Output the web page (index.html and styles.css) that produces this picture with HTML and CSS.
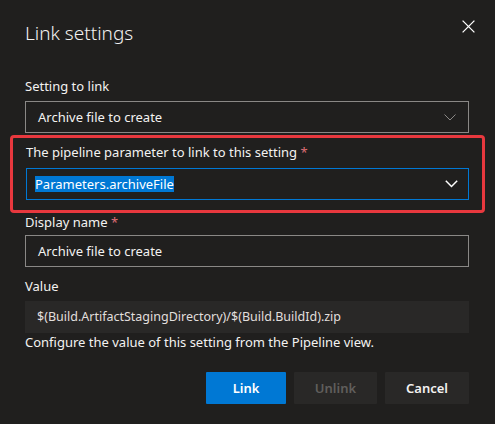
FILE: index.html
```html
<!DOCTYPE html>
<html>
<head>
<meta charset="utf-8">
<link rel="stylesheet" href="styles.css">
</head>
<body>
<div class="dialog">
  <div class="header">
    <h1 class="title">Link settings</h1>
    <button class="close" aria-label="Close">
      <svg width="13" height="13" viewBox="0 0 13 13"><path d="M0.6 0.6 L12.4 12.4 M12.4 0.6 L0.6 12.4" stroke="#ffffff" stroke-width="1.3" fill="none"/></svg>
    </button>
  </div>
  <div class="field f1">
    <div class="label">Setting to link</div>
    <div class="dropdown">
      <span class="text">Archive file to create</span>
      <svg class="chev" width="12" height="7" viewBox="0 0 12 7"><path d="M0.5 0.5 L6 6 L11.5 0.5" stroke="#8a8886" stroke-width="1" fill="none"/></svg>
    </div>
  </div>
  <div class="highlight">
    <div class="label">The pipeline parameter to link to this setting <span class="req">*</span></div>
    <div class="dropdown focus">
      <span class="sel">Parameters.archiveFile</span>
      <svg class="chev white" width="13" height="8" viewBox="0 0 13 8"><path d="M0.8 0.8 L6.5 6.5 L12.2 0.8" stroke="#ffffff" stroke-width="1.5" fill="none"/></svg>
    </div>
  </div>
  <div class="field f3">
    <div class="label">Display name <span class="req">*</span></div>
    <div class="input"><span class="text">Archive file to create</span></div>
  </div>
  <div class="field f4">
    <div class="label">Value</div>
    <div class="readonly"><span class="text mono">$(Build.ArtifactStagingDirectory)/$(Build.BuildId).zip</span></div>
    <div class="help">Configure the value of this setting from the Pipeline view.</div>
  </div>
  <div class="actions">
    <button class="btn primary">Link</button>
    <button class="btn disabled">Unlink</button>
    <button class="btn cancel">Cancel</button>
  </div>
</div>
</body>
</html>
```
FILE: styles.css
```css
* { box-sizing: border-box; }
html, body {
  margin: 0;
  padding: 0;
  background: #201f1e;
  width: 495px;
  height: 424px;
  overflow: hidden;
}
body {
  font-family: "Noto Sans", "Open Sans", sans-serif;
  color: #f3f2f1;
  font-size: 13px;
}
.dialog {
  padding: 20px 26px 0 25px;
}
.header {
  display: flex;
  justify-content: space-between;
  align-items: flex-start;
  height: 26px;
}
.title {
  margin: 0;
  font-weight: 300;
  font-size: 19px;
  line-height: 26px;
  color: #f3f2f1;
}
.close {
  background: none;
  border: 0;
  padding: 0;
  margin: 0 -6px 0 0;
  width: 13px;
  height: 13px;
  display: flex;
}
.label {
  font-size: 13px;
  line-height: 18px;
  height: 18px;
  margin-bottom: 6px;
  color: #f3f2f1;
}
.req { color: #de6d74; }
.f1 { margin-top: 31px; }
.dropdown, .input, .readonly {
  height: 32px;
  display: flex;
  align-items: center;
  justify-content: space-between;
  padding: 0 12px;
  border: 1px solid #8a8886;
}
.text { font-size: 13px; line-height: 18px; }
.highlight {
  margin: 2px -16px 0 -15px;
  padding: 5px 13px 10px 13px;
  border: 3px solid #e8383e;
  border-radius: 4px;
}
.highlight .label { margin-bottom: 7px; }
.dropdown.focus {
  border-color: #0078d4;
  padding: 0 10px 0 8px;
}
.sel {
  display: inline-block;
  background: #0078d4;
  color: #ffffff;
  font-size: 13px;
  line-height: 16px;
  height: 16px;
}
.f3 .label { margin-bottom: 4px; }
.readonly {
  border: none;
  background: #292827;
  color: #e1dfdd;
}
.mono { font-size: 12.5px; }
.f4 { margin-top: 10px; }
.help {
  line-height: 18px;
  color: #f3f2f1;
}
.actions {
  display: flex;
  justify-content: flex-end;
  gap: 8px;
  margin-top: 21px;
}
.btn {
  height: 32px;
  padding: 0;
  border: none;
  border-radius: 1px;
  font-family: inherit;
  font-size: 13px;
  font-weight: 600;
  background: #292827;
  color: #f3f2f1;
}
.btn.primary { background: #0078d4; color: #ffffff; width: 80px; }
.btn.disabled { color: #605e5c; width: 83px; }
.btn.cancel { width: 84px; }
```
